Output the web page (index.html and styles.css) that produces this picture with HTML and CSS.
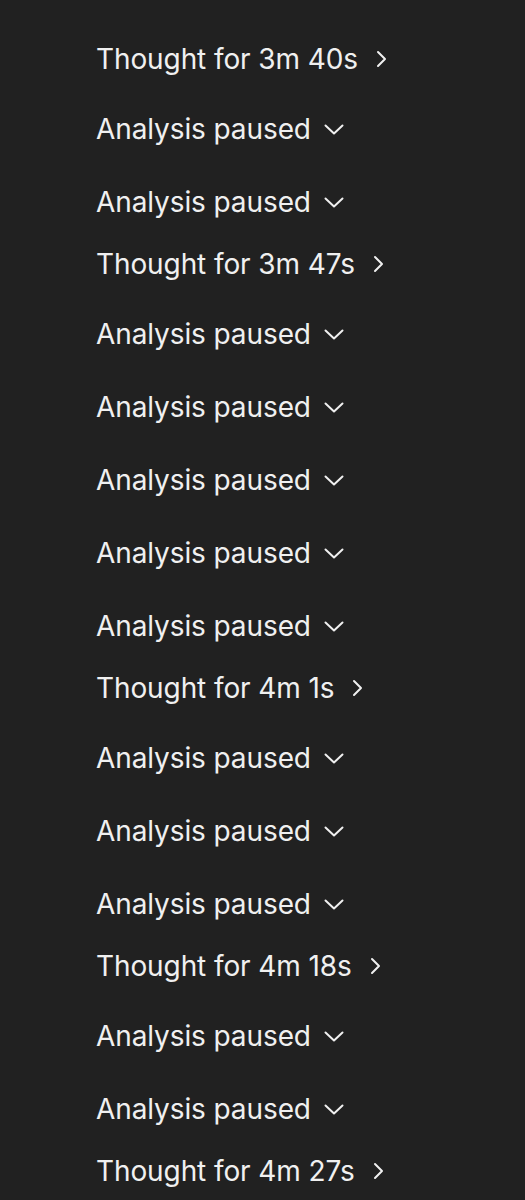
FILE: index.html
```html
<!DOCTYPE html>
<html>
	<head>
		<meta charset="UTF-8">
		<title>Thoughts</title>
		<link rel="stylesheet" href="styles.css">
	</head>
	<body>
		<div class="log">
			<div class="thought">Thought for 3m 40s <svg class="chev-r" viewBox="0 0 12 18"><path d="M3 2l7 7-7 7"/></svg></div>
			<div class="paused">Analysis paused <svg class="chev-d" viewBox="0 0 20 11"><path d="M1.5 1.5l8.5 8 8.5-8"/></svg></div>
			<div class="paused">Analysis paused <svg class="chev-d" viewBox="0 0 20 11"><path d="M1.5 1.5l8.5 8 8.5-8"/></svg></div>
			<div class="thought">Thought for 3m 47s <svg class="chev-r" viewBox="0 0 12 18"><path d="M3 2l7 7-7 7"/></svg></div>
			<div class="paused">Analysis paused <svg class="chev-d" viewBox="0 0 20 11"><path d="M1.5 1.5l8.5 8 8.5-8"/></svg></div>
			<div class="paused">Analysis paused <svg class="chev-d" viewBox="0 0 20 11"><path d="M1.5 1.5l8.5 8 8.5-8"/></svg></div>
			<div class="paused">Analysis paused <svg class="chev-d" viewBox="0 0 20 11"><path d="M1.5 1.5l8.5 8 8.5-8"/></svg></div>
			<div class="paused">Analysis paused <svg class="chev-d" viewBox="0 0 20 11"><path d="M1.5 1.5l8.5 8 8.5-8"/></svg></div>
			<div class="paused">Analysis paused <svg class="chev-d" viewBox="0 0 20 11"><path d="M1.5 1.5l8.5 8 8.5-8"/></svg></div>
			<div class="thought">Thought for 4m 1s <svg class="chev-r" viewBox="0 0 12 18"><path d="M3 2l7 7-7 7"/></svg></div>
			<div class="paused">Analysis paused <svg class="chev-d" viewBox="0 0 20 11"><path d="M1.5 1.5l8.5 8 8.5-8"/></svg></div>
			<div class="paused">Analysis paused <svg class="chev-d" viewBox="0 0 20 11"><path d="M1.5 1.5l8.5 8 8.5-8"/></svg></div>
			<div class="paused">Analysis paused <svg class="chev-d" viewBox="0 0 20 11"><path d="M1.5 1.5l8.5 8 8.5-8"/></svg></div>
			<div class="thought">Thought for 4m 18s <svg class="chev-r" viewBox="0 0 12 18"><path d="M3 2l7 7-7 7"/></svg></div>
			<div class="paused">Analysis paused <svg class="chev-d" viewBox="0 0 20 11"><path d="M1.5 1.5l8.5 8 8.5-8"/></svg></div>
			<div class="paused">Analysis paused <svg class="chev-d" viewBox="0 0 20 11"><path d="M1.5 1.5l8.5 8 8.5-8"/></svg></div>
			<div class="thought">Thought for 4m 27s <svg class="chev-r" viewBox="0 0 12 18"><path d="M3 2l7 7-7 7"/></svg></div>
		</div>
	</body>
</html>
```
FILE: styles.css
```css
html,
body {
	margin: 0;
	padding: 0;
	background: #212121;
}

.log {
	padding: 34px 0 0 96px;
	display: flex;
	flex-direction: column;
	font-family: "Inter", "Liberation Sans", sans-serif;
	font-size: 28px;
	letter-spacing: -0.1px;
	color: #f0f0f0;
	height: 1166px;
	overflow: hidden;
}

.thought,
.paused {
	display: flex;
	align-items: center;
	height: 40px;
	line-height: 40px;
}

.thought {
	margin: 5px 0 14px;
}

.paused {
	padding: 16px 0 17px;
}

svg {
	fill: none;
	stroke: #f0f0f0;
	stroke-width: 2;
	stroke-linecap: round;
	stroke-linejoin: round;
}

.chev-r {
	width: 12px;
	height: 18px;
	margin-left: 17px;
}

.chev-d {
	width: 20px;
	height: 11px;
	margin-left: 13px;
}
```
